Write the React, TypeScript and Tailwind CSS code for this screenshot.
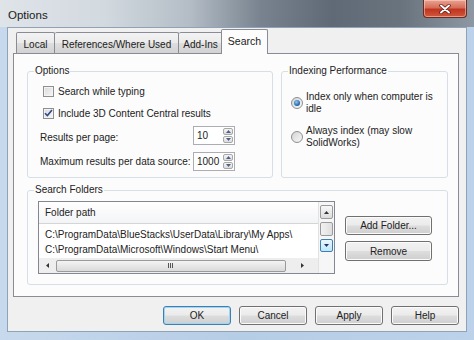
import React from "react"

const BTN =
  "flex items-center justify-center rounded-[3px] border border-[#707070] bg-[linear-gradient(180deg,#f2f2f2_0%,#ebebeb_48%,#dddddd_52%,#cfcfcf_100%)] shadow-[inset_0_0_0_1px_#fbfbfb]"

function Checkbox({ checked }: { checked?: boolean }) {
  return (
    <span className="flex items-center justify-center w-[11px] h-[11px] border border-[#8e8f8f] bg-[linear-gradient(135deg,#d9d9d9,#f7f7f7)] shadow-[inset_0_0_0_1px_#f4f4f4]">
      {checked && (
        <svg width="9" height="8" viewBox="0 0 9 8">
          <path d="M1 4.2 L3.4 6.6 L8 1" fill="none" stroke="#2f4b85" strokeWidth="1.6" />
        </svg>
      )}
    </span>
  )
}

function Radio({ checked }: { checked?: boolean }) {
  return (
    <span className="flex shrink-0 items-center justify-center w-[12px] h-[12px] rounded-full border border-[#8e8f8f] bg-[linear-gradient(135deg,#d4d4d4,#f8f8f8)]">
      {checked && (
        <span className="w-[6px] h-[6px] rounded-full bg-[radial-gradient(circle_at_40%_35%,#8cc8f2,#1d5ea8_70%,#0f3f7a)]" />
      )}
    </span>
  )
}

function Spin({ value }: { value: string }) {
  return (
    <div className="flex h-[19px] w-[42px] border border-[#abadb3] bg-white">
      <span className="flex-1 pl-[3px] leading-[17px]">{value}</span>
      <div className="flex flex-col w-[12px] p-px gap-px">
        <span className="flex-1 flex items-center justify-center rounded-[2px] border border-[#a7a7a7] bg-[linear-gradient(#f6f6f6,#dcdcdc)]">
          <svg width="5" height="3" viewBox="0 0 5 3"><path d="M0 3 L2.5 0 L5 3 Z" fill="#4d6185" /></svg>
        </span>
        <span className="flex-1 flex items-center justify-center rounded-[2px] border border-[#a7a7a7] bg-[linear-gradient(#f6f6f6,#dcdcdc)]">
          <svg width="5" height="3" viewBox="0 0 5 3"><path d="M0 0 L2.5 3 L5 0 Z" fill="#4d6185" /></svg>
        </span>
      </div>
    </div>
  )
}

function Group({ title, className, children }: { title: string; className: string; children: React.ReactNode }) {
  return (
    <fieldset className={`border border-[#d5dfe5] rounded-[3px] ${className}`}>
      <legend className="ml-[6px] px-[1px] leading-[12px]">{title}</legend>
      {children}
    </fieldset>
  )
}

function Tab({ label, w, selected, first }: { label: string; w: string; selected?: boolean; first?: boolean }) {
  if (selected)
    return (
      <div className={`relative z-10 -mb-px -ml-[2px] h-[25px] ${w} flex items-center justify-center border border-b-0 border-[#898c95] rounded-t-[2px] bg-[#fcfcfc] text-[10.5px]`}>
        {label}
      </div>
    )
  return (
    <div className={`h-[21px] ${w} flex items-center justify-center pt-[3px] border border-b-0 ${first ? "" : "border-l-0"} border-[#898c95] rounded-t-[2px] bg-[linear-gradient(180deg,#f3f3f3_0%,#ebebeb_48%,#dedede_52%,#d2d2d2_100%)]`}>
      {label}
    </div>
  )
}

export default function App() {
  return (
    <div className="w-[474px] h-[340px] overflow-hidden bg-[linear-gradient(90deg,#c7d9ec_0%,#b6cde6_50%,#bcd2ea_100%)] font-['Liberation_Sans',Arial,sans-serif] text-[10px] text-[#222]">
      {/* title bar */}
      <div className="h-[27px] flex items-start bg-[linear-gradient(90deg,#dfe4e9_0%,#d2d9df_22%,#b4bdc6_40%,#78838f_55%,#5f6a76_70%,#69747f_85%,#8d98a3_100%)]">
        <span className="pl-[8px] pt-[7px] text-[11.5px] text-[#1a1a1a]">Options</span>
        <div className="ml-auto mr-[7px] w-[44px] h-[18px] flex items-center justify-center rounded-b-[4px] border border-t-0 border-[#6b2b22] bg-[linear-gradient(180deg,#eaa392_0%,#d66e59_45%,#c0351f_55%,#d0583c_100%)] shadow-[inset_0_0_0_1px_rgba(255,220,210,0.5)]">
          <svg width="12" height="10" viewBox="0 0 12 10">
            <path d="M2 1.5 L10 8.5 M10 1.5 L2 8.5" stroke="#5a1a12" strokeWidth="3.4" strokeLinecap="round" />
            <path d="M2 1.5 L10 8.5 M10 1.5 L2 8.5" stroke="#ffffff" strokeWidth="1.9" strokeLinecap="round" />
          </svg>
        </div>
      </div>

      {/* client */}
      <div className="ml-[7px] w-[460px] h-[305px] flex flex-col border border-[#8fa2b6] bg-[#f0f0f0]">
        <div className="h-[25px] flex items-end pl-[8px]">
          <Tab label="Local" w="w-[39px]" first />
          <Tab label="References/Where Used" w="w-[124px]" />
          <Tab label="Add-Ins" w="w-[44px]" />
          <Tab label="Search" w="w-[47px]" selected />
        </div>

        <div className="ml-[5px] w-[446px] h-[244px] border border-[#898c95] bg-[#fcfcfc] pt-[11px] pl-[13px]">
          <div className="flex gap-[8px]">
            <Group title="Options" className="w-[246px] h-[113px]">
              <div className="pl-[15px] flex flex-col">
                <div className="mt-[7px] h-[14px] flex items-center gap-[4px]">
                  <Checkbox />
                  <span>Search while typing</span>
                </div>
                <div className="mt-[8px] h-[14px] flex items-center gap-[4px]">
                  <Checkbox checked />
                  <span>Include 3D Content Central results</span>
                </div>
              </div>
              <div className="pl-[12px] flex flex-col">
                <div className="mt-[6px] flex items-center">
                  <span className="w-[153px] pt-[3px]">Results per page:</span>
                  <Spin value="10" />
                </div>
                <div className="mt-[7px] flex items-center">
                  <span className="w-[153px]">Maximum results per data source:</span>
                  <Spin value="1000" />
                </div>
              </div>
            </Group>

            <Group title="Indexing Performance" className="w-[167px] h-[113px]">
              <div className="pl-[9px] flex flex-col">
                <div className="mt-[14px] flex items-center gap-[3px]">
                  <Radio checked />
                  <span className="leading-[12px]">
                    Index only when computer is
                    <br />
                    idle
                  </span>
                </div>
                <div className="mt-[10px] flex items-center gap-[3px]">
                  <Radio />
                  <span className="leading-[12px]">
                    Always index (may slow
                    <br />
                    SolidWorks)
                  </span>
                </div>
              </div>
            </Group>
          </div>

          <Group title="Search Folders" className="mt-[6px] w-[421px] h-[101px]">
            <div className="mt-[5px] pl-[10px] flex gap-[10px]">
              <div className="flex w-[297px] h-[73px] border border-[#828790] bg-white">
                <div className="flex flex-col w-[279px]">
                  <div className="h-[22px] shrink-0 flex items-center pl-[6px] border-b border-[#d5d5d5] bg-[linear-gradient(#ffffff,#f3f4f6)]">
                    Folder path
                  </div>
                  <div className="flex-1 pt-[3px] pl-[6px] leading-[15px] whitespace-nowrap overflow-hidden">
                    <div>C:\ProgramData\BlueStacks\UserData\Library\My Apps\</div>
                    <div>C:\ProgramData\Microsoft\Windows\Start Menu\</div>
                  </div>
                  <div className="h-[15px] shrink-0 flex items-center bg-[#eeeeee]">
                    <span className="w-[17px] flex justify-center">
                      <svg width="3" height="5" viewBox="0 0 3 5"><path d="M3 0 L0 2.5 L3 5 Z" fill="#333" /></svg>
                    </span>
                    <span className="w-[230px] h-[12px] flex items-center justify-center rounded-[2px] border border-[#9a9a9a] bg-[linear-gradient(#f4f4f4,#dadada)]">
                      <svg width="6" height="5" viewBox="0 0 6 5"><path d="M0.5 0 V5 M2.5 0 V5 M4.5 0 V5" stroke="#555" strokeWidth="1" /></svg>
                    </span>
                    <span className="flex-1 flex justify-center">
                      <svg width="3" height="5" viewBox="0 0 3 5"><path d="M0 0 L3 2.5 L0 5 Z" fill="#333" /></svg>
                    </span>
                  </div>
                </div>
                <div className="w-[16px] flex flex-col items-center pt-[3px] gap-[3px] bg-[#f6f6f6] border-l border-[#e2e2e2]">
                  <span className="w-[13px] h-[14px] flex items-center justify-center rounded-[2px] border border-[#9a9a9a] bg-[linear-gradient(#f8f8f8,#dcdcdc)]">
                    <svg width="5" height="3" viewBox="0 0 5 3"><path d="M0 3 L2.5 0 L5 3 Z" fill="#333" /></svg>
                  </span>
                  <span className="w-[13px] h-[14px] rounded-[2px] border border-[#9a9a9a] bg-[linear-gradient(90deg,#f2f2f2,#dedede)]" />
                  <span className="w-[13px] h-[13px] flex items-center justify-center rounded-[2px] border border-[#3c7fb1] bg-[linear-gradient(#eaf6fd,#bee6fd)]">
                    <svg width="5" height="3" viewBox="0 0 5 3"><path d="M0 0 L2.5 3 L5 0 Z" fill="#1e395b" /></svg>
                  </span>
                </div>
              </div>
              <div className="mt-[15px] flex flex-col gap-[6px]">
                <button className={`${BTN} w-[87px] h-[19px]`}>Add Folder...</button>
                <button className={`${BTN} w-[87px] h-[20px]`}>Remove</button>
              </div>
            </div>
          </Group>
        </div>

        <div className="mt-[9px] pr-[7px] flex justify-end gap-[8px]">
          <button className="flex items-center justify-center w-[68px] h-[19px] rounded-[3px] border border-[#3c7fb1] bg-[linear-gradient(180deg,#f2f2f2_0%,#ebebeb_48%,#dddddd_52%,#cfcfcf_100%)] shadow-[inset_0_0_0_1px_#9fd6f5]">
            OK
          </button>
          <button className={`${BTN} w-[68px] h-[19px]`}>Cancel</button>
          <button className={`${BTN} w-[68px] h-[19px]`}>Apply</button>
          <button className={`${BTN} w-[68px] h-[19px]`}>Help</button>
        </div>
      </div>
    </div>
  )
}
